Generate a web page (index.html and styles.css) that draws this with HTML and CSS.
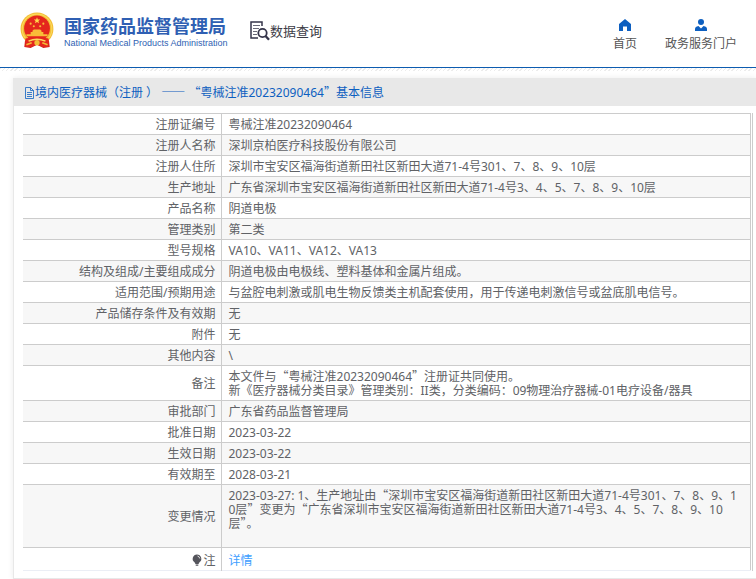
FILE: index.html
```html
<!DOCTYPE html>
<html lang="zh-CN">
<head>
  <meta charset="UTF-8">
  <meta name="viewport" content="width=device-width, initial-scale=1.0">
  <title>数据查询</title>
  <link rel="stylesheet" href="styles.css">
</head>
<body>
  <header class="header">
    <div class="brand">
      <svg class="emblem" viewBox="0 0 32 34" aria-hidden="true">
        <path d="M5 24 L4 33 L10 34 L16 31 L22 34 L28 33 L27 24 Z" fill="#d3231c"/>
        <circle cx="16" cy="16" r="15.5" fill="#f3bd35"/>
        <circle cx="16" cy="16" r="14" fill="none" stroke="#fbd95c" stroke-width="1"/>
        <circle cx="16" cy="15.5" r="12.2" fill="#e4261d"/>
        <path d="M16 5 l.8 2 2.2.1 -1.7 1.4 .6 2.1 -1.9-1.2 -1.9 1.2 .6-2.1 -1.7-1.4 2.2-.1z" fill="#ffd84a"/>
        <g fill="#f9bd38">
          <circle cx="10" cy="11" r="1"/>
          <circle cx="13" cy="13.5" r="1"/>
          <circle cx="19" cy="13.5" r="1"/>
          <circle cx="22" cy="11" r="1"/>
          <path d="M11.5 18 L13 16.5 H19 L20.5 18 L20 19 H22 V21 H26 V23 H6 V21 H10 V19 H12 Z"/>
        </g>
        <path d="M5 25 Q16 22 27 25 L27 33 L22 33 L16 31 L10 33 L5 33 Z" fill="#e4261d"/>
        <path d="M8 27.5 Q16 24 24 27.5" fill="none" stroke="#fbd95c" stroke-width="1.5"/>
        <circle cx="16" cy="29" r="2.5" fill="#f3bd35"/>
        <path d="M6 31 L11 29 M26 31 L21 29" stroke="#f3bd35" stroke-width="1.5"/>
      </svg>
      <div class="brand-text">
        <div class="brand-cn">国家药品监督管理局</div>
        <div class="brand-en">National Medical Products Administration</div>
      </div>
    </div>

    <div class="section">
      <svg class="section-icon" viewBox="0 0 20 20" aria-hidden="true">
        <path d="M12 5 V1 H1 V17 H8" fill="none" stroke="#35354a" stroke-width="1.5"/>
        <path d="M3 4.5 H10 M3 7.5 H9 M3 10.5 H7 M3 13.5 H7" stroke="#6a6a78" stroke-width="1.2"/>
        <circle cx="12.5" cy="12" r="4.2" fill="#fff" stroke="#35354a" stroke-width="1.8"/>
        <path d="M15.5 15 L19 18.7" stroke="#35354a" stroke-width="2.4"/>
      </svg>
      <span>数据查询</span>
    </div>

    <nav class="nav">
      <a href="#">
        <svg viewBox="0 0 12 12" aria-hidden="true"><path d="M6 0 L12 5 V12 H8 V7.5 H4 V12 H0 V5 Z" fill="#0d5fc0"/></svg>
        <span>首页</span>
      </a>
      <a href="#">
        <svg viewBox="0 0 12 12" aria-hidden="true"><circle cx="6" cy="3" r="3" fill="#0d5fc0"/><path d="M0 12 V10 Q0 7.5 3.5 7 L6 9.5 L8.5 7 Q12 7.5 12 10 V12 Z" fill="#0d5fc0"/></svg>
        <span>政务服务门户</span>
      </a>
    </nav>
  </header>
  <div class="hatch"></div>

  <main class="panel">
    <h1 class="panel-title">
      <svg class="doc-icon" viewBox="0 0 11 12" aria-hidden="true"><path d="M1.5 .5 H6.5 L9.5 3.5 V11.5 H1.5 Z M6.5 .5 V3.5 H9.5 M3 5.5 H8 M3 7.5 H8 M3 9.5 H8" fill="none" stroke="#0d5fc0" stroke-width=".8"/></svg>
      <span>境内医疗器械（注册 ） <span class="cjk">——</span> <span class="cjk">“</span>粤械注准20232090464<span class="cjk">”</span>基本信息</span>
    </h1>

    <div class="table-wrap">
      <table class="info">
        <tbody>
          <tr><th scope="row">注册证编号</th><td>粤械注准20232090464</td></tr>
          <tr><th scope="row">注册人名称</th><td>深圳京柏医疗科技股份有限公司</td></tr>
          <tr><th scope="row">注册人住所</th><td>深圳市宝安区福海街道新田社区新田大道71-4号301、7、8、9、10层</td></tr>
          <tr><th scope="row">生产地址</th><td>广东省深圳市宝安区福海街道新田社区新田大道71-4号3、4、5、7、8、9、10层</td></tr>
          <tr><th scope="row">产品名称</th><td>阴道电极</td></tr>
          <tr><th scope="row">管理类别</th><td>第二类</td></tr>
          <tr><th scope="row">型号规格</th><td>VA10、VA11、VA12、VA13</td></tr>
          <tr><th scope="row">结构及组成/主要组成成分</th><td>阴道电极由电极线、塑料基体和金属片组成。</td></tr>
          <tr><th scope="row">适用范围/预期用途</th><td>与盆腔电刺激或肌电生物反馈类主机配套使用，用于传递电刺激信号或盆底肌电信号。</td></tr>
          <tr><th scope="row">产品储存条件及有效期</th><td>无</td></tr>
          <tr><th scope="row">附件</th><td>无</td></tr>
          <tr><th scope="row">其他内容</th><td>\</td></tr>
          <tr><th scope="row">备注</th><td>本文件与<span class="cjk">“</span>粤械注准20232090464<span class="cjk">”</span>注册证共同使用。<br>新《医疗器械分类目录》管理类别：II类，分类编码：09物理治疗器械-01电疗设备/器具</td></tr>
          <tr><th scope="row">审批部门</th><td>广东省药品监督管理局</td></tr>
          <tr><th scope="row">批准日期</th><td>2023-03-22</td></tr>
          <tr><th scope="row">生效日期</th><td>2023-03-22</td></tr>
          <tr><th scope="row">有效期至</th><td>2028-03-21</td></tr>
          <tr><th scope="row">变更情况</th><td>2023-03-27: 1、生产地址由<span class="cjk">“</span>深圳市宝安区福海街道新田社区新田大道71-4号301、7、8、9、10层<span class="cjk">”</span>变更为<span class="cjk">“</span>广东省深圳市宝安区福海街道新田社区新田大道71-4号3、4、5、7、8、9、10层<span class="cjk">”</span>。<br><br></td></tr>
          <tr class="note">
            <th scope="row"><svg class="bulb" viewBox="0 0 10 12" aria-hidden="true"><path d="M5 .5 A4.3 4.3 0 0 0 2.5 8.3 L3.5 10 H6.5 L7.5 8.3 A4.3 4.3 0 0 0 5 .5 Z M3.7 10.5 H6.3 V11.8 H3.7 Z" fill="#55555c"/><path d="M5.5 2 Q7.5 2.5 7.8 4.5" fill="none" stroke="#fff" stroke-width=".8"/></svg>注</th>
            <td><a href="#">详情</a></td>
          </tr>
        </tbody>
      </table>
    </div>
  </main>
</body>
</html>
```

FILE: styles.css
```css
* {
  box-sizing: border-box;
}

body {
  margin: 0;
  background: #fff;
  color: #606266;
  font-family: "Noto Sans", "Noto Sans CJK SC", sans-serif;
  font-size: 12px;
  line-height: 14px;
}

/* full-width punctuation */
.cjk {
  font-family: "Noto Sans CJK SC", sans-serif;
  line-height: 0;
}

a {
  text-decoration: none;
}

.header {
  display: flex;
  align-items: flex-start;
  height: 68px;
  padding: 12px 19px 0 20px;
  border-bottom: 1px solid #0d5cb0;
}

.brand {
  display: flex;
  gap: 10px;
}

.emblem {
  width: 34px;
  height: 36px;
}

.brand-text {
  width: 162px;
  padding-top: 4px;
  color: #2f5fb3;
  white-space: nowrap;
}

.brand-cn {
  font-size: 18px;
  font-weight: bold;
  line-height: 20px;
}

.brand-en {
  font-family: "Liberation Sans", Arial, sans-serif;
  font-size: 9px;
  line-height: 14px;
}

.section {
  display: flex;
  align-items: center;
  margin: 9px 0 0 24px;
  color: #3c3c46;
  font-size: 13px;
  white-space: nowrap;
}

.section-icon {
  width: 20px;
  height: 20px;
}

.nav {
  display: flex;
  gap: 28px;
  margin-left: auto;
  padding-top: 7px;
}

.nav a {
  display: flex;
  flex-direction: column;
  align-items: center;
  gap: 6px;
  color: #555;
  white-space: nowrap;
}

.nav svg {
  width: 12px;
  height: 12px;
}

/* dotted strip under the header */
.hatch {
  height: 3px;
  background: repeating-linear-gradient(135deg, #ececec 0 1px, #fff 1px 3px);
}

.panel {
  margin: 7px 0 0 13px;
  border: 1px solid #e8e8e8;
  border-right: 0;
  box-shadow: 0 0 6px rgba(0, 0, 0, 0.08);
}

.panel-title {
  display: flex;
  align-items: center;
  height: 27px;
  margin: 0;
  padding-left: 10px;
  background: #e8e8e8;
  color: #0d5fc0;
  font-size: 12px;
  font-weight: normal;
  white-space: nowrap;
}

.doc-icon {
  width: 11px;
  height: 12px;
}

.table-wrap {
  margin: 7px 3px 7px 9px;
  padding-right: 1px;
  border-right: 1px solid #ccc;
}

.info {
  width: 100%;
  border-collapse: collapse;
  border-right: 1px solid #ccc;
  border-bottom: 1px solid #ebeef5;
  table-layout: fixed;
}

.info th,
.info td {
  padding: 4px 5px 2px;
  border-top: 1px solid #ccc;
  font-weight: normal;
  vertical-align: middle;
}

.info th {
  width: 198px;
  border-right: 1px solid #ccc;
  text-align: right;
}

.info td {
  padding-right: 10px;
  padding-left: 7px;
  text-align: left;
  word-break: break-all;
}

.info tr:nth-child(even) {
  background: #f7f7f7;
}

.info .note th,
.info .note td {
  padding-top: 6px;
}

.info .note a {
  color: #409eff;
}

.bulb {
  width: 12px;
  height: 12px;
  vertical-align: -1px;
}
```
